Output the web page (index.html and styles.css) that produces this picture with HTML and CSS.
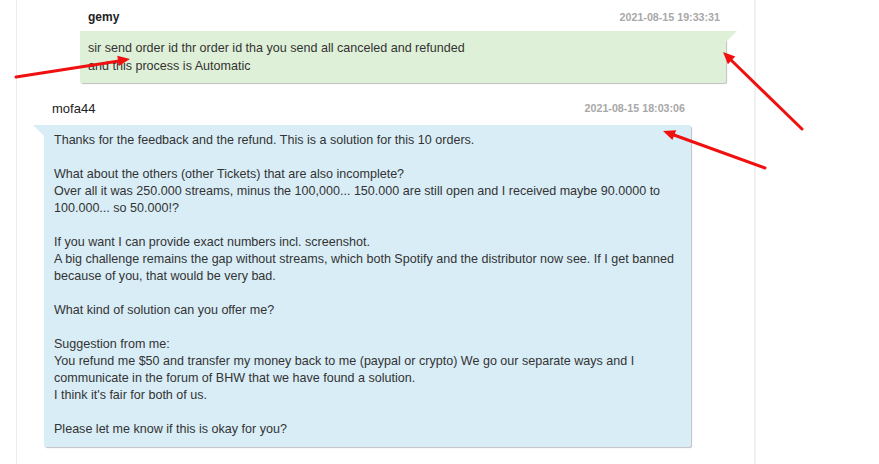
FILE: index.html
```html
<!DOCTYPE html>
<html>
<head>
<meta charset="utf-8">
<link rel="stylesheet" href="styles.css">
</head>
<body>
<div class="panel">
  <div class="msg msg-right">
    <div class="msg-head">
      <span class="name name-bold">gemy</span>
      <span class="date">2021-08-15 19:33:31</span>
    </div>
    <div class="bubble bubble-green">sir send order id thr order id tha you send all canceled and refunded<br>and this process is Automatic</div>
  </div>
  <div class="msg msg-left">
    <div class="msg-head">
      <span class="name">mofa44</span>
      <span class="date">2021-08-15 18:03:06</span>
    </div>
    <div class="bubble bubble-blue">Thanks for the feedback and the refund. This is a solution for this 10 orders.<br><br>What about the others (other Tickets) that are also incomplete?<br>Over all it was 250.000 streams, minus the 100,000... 150.000 are still open and I received maybe 90.0000 to<br>100.000... so 50.000!?<br><br>If you want I can provide exact numbers incl. screenshot.<br>A big challenge remains the gap without streams, which both Spotify and the distributor now see. If I get banned<br>because of you, that would be very bad.<br><br>What kind of solution can you offer me?<br><br>Suggestion from me:<br>You refund me $50 and transfer my money back to me (paypal or crypto) We go our separate ways and I<br>communicate in the forum of BHW that we have found a solution.<br>I think it's fair for both of us.<br><br>Please let me know if this is okay for you?</div>
  </div>
</div>
<svg class="arrows" width="879" height="464" viewBox="0 0 879 464">
  <g stroke="#f01010" stroke-width="3" stroke-linecap="round" fill="none">
    <line x1="16" y1="77" x2="119" y2="61"/>
    <line x1="802" y1="129" x2="731" y2="60"/>
    <line x1="765" y1="168" x2="674" y2="135"/>
  </g>
  <g fill="#f01010">
    <polygon points="130,59 118.9,66 117.3,55.8"/>
    <polygon points="723,52 735.3,56.6 727.9,64.2"/>
    <polygon points="663,131 676.2,130.2 672.4,140"/>
  </g>
</svg>
</body>
</html>
```

FILE: styles.css
```css
html, body {
  margin: 0;
  padding: 0;
  height: 100%;
  background: #fff;
  overflow: hidden;
}
body {
  font-family: "Liberation Sans", Arial, sans-serif;
  font-size: 12px;
  line-height: 17px;
  color: #333;
}
.panel {
  box-sizing: border-box;
  margin-left: 16px;
  width: 740px;
  height: 100%;
  border-left: 1px solid #ececec;
  border-right: 2px solid #f0f0f0;
  padding-top: 9px;
  display: flex;
  flex-direction: column;
}
.msg-right {
  margin: 0 28px 0 63px;
}
.msg-left {
  margin: 16px 63px 0 27px;
}
.msg-head {
  display: flex;
  justify-content: space-between;
  align-items: center;
  padding: 0 6px 0 8px;
  height: 17px;
}
.msg-right .msg-head { margin-bottom: 5px; }
.msg-left .msg-head { margin-bottom: 8px; margin-top: 1px; }
.name {
  font-size: 13px;
  color: #222;
}
.name-bold {
  font-size: 12px;
  font-weight: bold;
}
.date {
  font-size: 10.7px;
  font-weight: bold;
  color: #a8a8a8;
}
.bubble {
  position: relative;
  font-size: 12.55px;
  padding: 7px 10px 10px 8px;
  box-shadow: 1px 1px 1px rgba(0,0,0,0.25);
}
.bubble-green {
  background: #dff0d8;
  line-height: 18px;
  padding-top: 7.5px;
  padding-bottom: 8.5px;
  border-radius: 0 0 2px 2px;
}
.bubble-green::before {
  content: "";
  position: absolute;
  top: 0;
  right: -11px;
  width: 0;
  height: 0;
  border-top: 11px solid #dff0d8;
  border-right: 11px solid transparent;
}
.bubble-blue {
  background: #d9edf7;
  padding-left: 10px;
  padding-bottom: 9px;
  border-radius: 0 3px 2px 2px;
}
.bubble-blue::before {
  content: "";
  position: absolute;
  top: 0;
  left: -11px;
  width: 0;
  height: 0;
  border-top: 11px solid #d9edf7;
  border-left: 11px solid transparent;
}
.arrows {
  position: absolute;
  left: 0;
  top: 0;
  pointer-events: none;
}
```
